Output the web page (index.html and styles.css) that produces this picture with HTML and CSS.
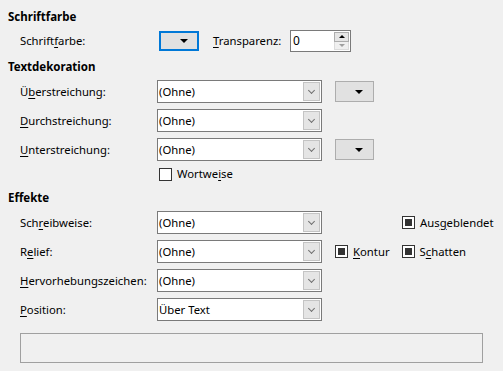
FILE: index.html
```html
<!DOCTYPE html>
<html lang="de">
<head>
    <meta charset="UTF-8">
    <title>Schrifteffekte</title>
    <link rel="stylesheet" href="styles.css">
</head>
<body>
    <div class="dialog">
        <!-- Schriftfarbe -->
        <h3 class="section-title">Schriftfarbe</h3>
        <div class="row row-color">
            <span class="label">Schrift<u>f</u>arbe:</span>
            <div class="inline-controls">
                <button class="color-btn focused"><span class="arrow"></span></button>
                <span class="label transp-label"><u>T</u>ransparenz:</span>
                <div class="spin">
                    <span class="spin-value">0</span>
                    <div class="spin-btns">
                        <span class="spin-up"></span>
                        <span class="spin-down"></span>
                    </div>
                </div>
            </div>
        </div>

        <!-- Textdekoration -->
        <h3 class="section-title">Textdekoration</h3>
        <div class="grid">
            <span class="label">Ü<u>b</u>erstreichung:</span>
            <div class="combo"><span class="combo-text">(Ohne)</span><span class="combo-btn"><span class="chevron"></span></span></div>
            <div class="extra"><button class="color-btn small"><span class="arrow"></span></button></div>

            <span class="label"><u>D</u>urchstreichung:</span>
            <div class="combo"><span class="combo-text">(Ohne)</span><span class="combo-btn"><span class="chevron"></span></span></div>
            <div class="extra"></div>

            <span class="label"><u>U</u>nterstreichung:</span>
            <div class="combo"><span class="combo-text">(Ohne)</span><span class="combo-btn"><span class="chevron"></span></span></div>
            <div class="extra"><button class="color-btn small"><span class="arrow"></span></button></div>
        </div>
        <div class="word-row">
            <label class="check"><span class="box"></span><span>Wortwe<u>i</u>se</span></label>
        </div>

        <!-- Effekte -->
        <h3 class="section-title effects-title">Effekte</h3>
        <div class="grid">
            <span class="label">Sch<u>r</u>eibweise:</span>
            <div class="combo"><span class="combo-text">(Ohne)</span><span class="combo-btn"><span class="chevron"></span></span></div>
            <div class="extra">
                <label class="check tri right-check"><span class="box"></span><span>Aus<u>g</u>eblendet</span></label>
            </div>

            <span class="label">R<u>e</u>lief:</span>
            <div class="combo"><span class="combo-text">(Ohne)</span><span class="combo-btn"><span class="chevron"></span></span></div>
            <div class="extra">
                <label class="check tri"><span class="box"></span><span><u>K</u>ontur</span></label>
                <label class="check tri"><span class="box"></span><span>S<u>c</u>hatten</span></label>
            </div>

            <span class="label"><u>H</u>ervorhebungszeichen:</span>
            <div class="combo"><span class="combo-text">(Ohne)</span><span class="combo-btn"><span class="chevron"></span></span></div>
            <div class="extra"></div>

            <span class="label"><u>P</u>osition:</span>
            <div class="combo"><span class="combo-text">Über Text</span><span class="combo-btn"><span class="chevron"></span></span></div>
            <div class="extra"></div>
        </div>

        <!-- Vorschau -->
        <div class="preview"></div>
    </div>
</body>
</html>
```

FILE: styles.css
```css
body {
  margin: 0;
  background-color: #f0f0f0;
  font-family: "Noto Sans", "Open Sans", sans-serif;
  font-size: 11.3px;
  color: #000;
}
.dialog {
  padding: 9px 0 0 8px;
}
.section-title {
  margin: 0;
  font-size: 11.5px;
  font-weight: bold;
  line-height: 16px;
  height: 16px;
}
.section-title + .row,
.section-title + .grid {
  margin-top: 5px;
}
.row,
.grid,
.word-row,
.preview {
  margin-left: 12px;
}
.row {
  display: grid;
  grid-template-columns: 137px auto;
  align-items: center;
  height: 22px;
  margin-bottom: 7px;
}
.label {
  white-space: nowrap;
  line-height: 16px;
}
.label u,
.check u {
  text-decoration-thickness: 1px;
  text-underline-offset: 2px;
}
.inline-controls {
  display: flex;
  align-items: center;
}

/* colour drop buttons */
.color-btn {
  display: flex;
  align-items: center;
  justify-content: flex-end;
  box-sizing: border-box;
  padding: 0 10px 0 0;
  background-color: #e1e1e1;
  border: 1px solid #adadad;
  margin: 0;
}
.color-btn.focused {
  width: 40px;
  height: 20px;
  margin-left: 2px;
  border: 2px solid #0078d7;
  padding-right: 9px;
}
.color-btn.small {
  width: 39px;
  height: 21px;
}
.arrow {
  width: 0;
  height: 0;
  border-left: 4px solid transparent;
  border-right: 4px solid transparent;
  border-top: 4px solid #000;
}
.transp-label {
  margin-left: 14px;
  width: 77px;
}
.spin {
  display: flex;
  box-sizing: border-box;
  width: 61px;
  height: 22px;
  background: #fff;
  border: 1px solid #7a7a7a;
}
.spin-value {
  flex: 1;
  padding-left: 2px;
  line-height: 20px;
  font-size: 12px;
}
.spin-btns {
  display: flex;
  flex-direction: column;
  width: 15px;
  margin: 1px 1px 1px 0;
}
.spin-up,
.spin-down {
  flex: 1;
  display: flex;
  align-items: center;
  justify-content: center;
  box-sizing: border-box;
}
.spin-up {
  background: #e5e5e5;
  border: 1px solid #adadad;
}
.spin-down {
  background: #f0f0f0;
  border: 1px solid #dcdcdc;
  border-top: none;
}
.spin-up::before {
  content: "";
  border-left: 3px solid transparent;
  border-right: 3px solid transparent;
  border-bottom: 3px solid #000;
}
.spin-down::before {
  content: "";
  border-left: 3px solid transparent;
  border-right: 3px solid transparent;
  border-top: 3px solid #a0a0a0;
}

/* combo boxes */
.grid {
  display: grid;
  grid-template-columns: 137px 165px auto;
  grid-auto-rows: 23px;
  row-gap: 6px;
  align-items: center;
}
.combo {
  display: flex;
  box-sizing: border-box;
  height: 23px;
  background: #fff;
  border: 1px solid #7a7a7a;
}
.combo-text {
  flex: 1;
  padding-left: 1px;
  line-height: 21px;
}
.combo-btn {
  display: flex;
  align-items: center;
  justify-content: center;
  box-sizing: border-box;
  width: 17px;
  margin: 1px 1px 1px 0;
  background: #e5e5e5;
  border: 1px solid #c4c4c4;
}
.chevron {
  width: 4px;
  height: 4px;
  border-right: 1px solid #707070;
  border-bottom: 1px solid #707070;
  transform: rotate(45deg);
  margin-top: -3px;
}
.extra {
  display: flex;
  align-items: center;
  padding-left: 13px;
  gap: 12px;
}

/* check boxes */
.word-row {
  padding-left: 139px;
  margin-top: 6px;
  height: 14px;
}
.check {
  display: flex;
  align-items: center;
  gap: 5px;
  white-space: nowrap;
  line-height: 14px;
}
.box {
  box-sizing: border-box;
  width: 13px;
  height: 13px;
  background: #fff;
  border: 1px solid #333;
}
.check.tri .box {
  padding: 2px;
}
.check.tri .box::before {
  content: "";
  display: block;
  width: 7px;
  height: 7px;
  background: #333;
}
.right-check {
  margin-left: 67px;
}
.effects-title {
  margin-top: 9px;
}

.preview {
  box-sizing: border-box;
  width: 463px;
  height: 30px;
  margin-top: 12px;
  border: 1px solid #a0a0a0;
}
```
